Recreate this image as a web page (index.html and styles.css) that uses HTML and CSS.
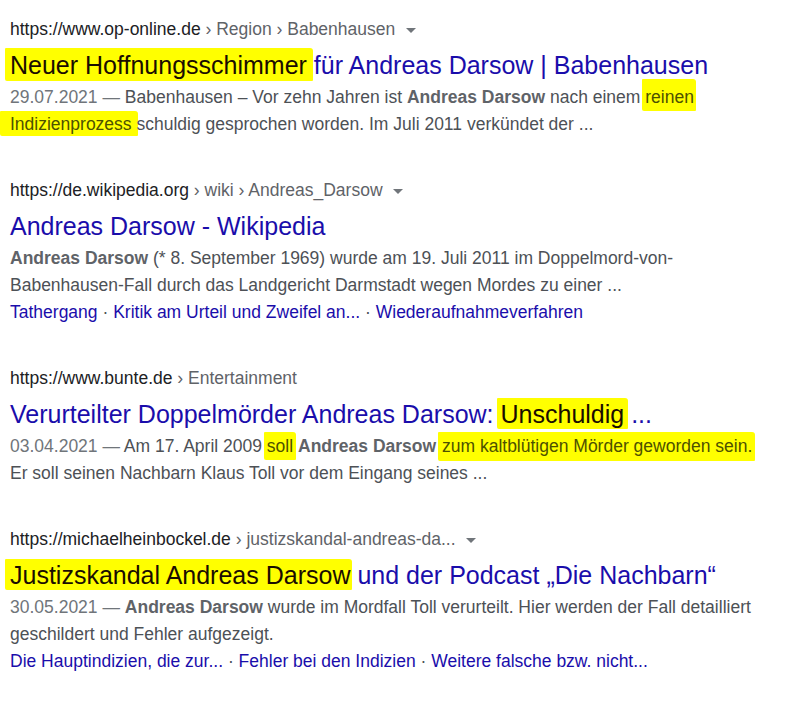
FILE: index.html
```html
<!DOCTYPE html>
<html lang="de">
<head>
<meta charset="UTF-8">
<title>Andreas Darsow - Suche</title>
<link rel="stylesheet" href="styles.css">
</head>
<body>

<div class="results">

    <div class="result">
        <div class="cite">https://www.op-online.de <span class="crumb">› Region › Babenhausen</span> <span class="arrow"></span></div>
        <h3 class="title"><a href="#"><span class="mark mark-title m1">Neuer Hoffnungsschimmer</span> für Andreas Darsow | Babenhausen</a></h3>
        <div class="snippet">
            <span class="date">29.07.2021 — </span>Babenhausen – Vor zehn Jahren ist <b>Andreas Darsow</b> nach einem <span class="mark m2">reinen</span><br>
            <span class="mark m3">Indizienprozess</span> schuldig gesprochen worden. Im Juli 2011 verkündet der ...
        </div>
    </div>

    <div class="result">
        <div class="cite">https://de.wikipedia.org <span class="crumb">› wiki › Andreas_Darsow</span> <span class="arrow"></span></div>
        <h3 class="title"><a href="#">Andreas Darsow - Wikipedia</a></h3>
        <div class="snippet">
            <b>Andreas Darsow</b> (* 8. September 1969) wurde am 19. Juli 2011 im Doppelmord-von-<br>
            Babenhausen-Fall durch das Landgericht Darmstadt wegen Mordes zu einer ...
        </div>
        <div class="sitelinks">
            <a href="#">Tathergang</a> · <a href="#">Kritik am Urteil und Zweifel an...</a> · <a href="#">Wiederaufnahmeverfahren</a>
        </div>
    </div>

    <div class="result">
        <div class="cite">https://www.bunte.de <span class="crumb">› Entertainment</span></div>
        <h3 class="title"><a href="#">Verurteilter Doppelmörder Andreas Darsow: <span class="mark mark-title m4">Unschuldig</span> ...</a></h3>
        <div class="snippet">
            <span class="date">03.04.2021 — </span>Am 17. April 2009 <span class="mark m5">soll</span> <b>Andreas Darsow</b> <span class="mark m6">zum kaltblütigen Mörder geworden sein.</span><br>
            Er soll seinen Nachbarn Klaus Toll vor dem Eingang seines ...
        </div>
    </div>

    <div class="result">
        <div class="cite">https://michaelheinbockel.de <span class="crumb">› justizskandal-andreas-da...</span> <span class="arrow"></span></div>
        <h3 class="title"><a href="#"><span class="mark mark-title m7">Justizskandal Andreas Darsow</span> und der Podcast „Die Nachbarn“</a></h3>
        <div class="snippet">
            <span class="date">30.05.2021 — </span><b>Andreas Darsow</b> wurde im Mordfall Toll verurteilt. Hier werden der Fall detailliert<br>
            geschildert und Fehler aufgezeigt.
        </div>
        <div class="sitelinks">
            <a href="#">Die Hauptindizien, die zur...</a> · <a href="#">Fehler bei den Indizien</a> · <a href="#">Weitere falsche bzw. nicht...</a>
        </div>
    </div>

</div>

</body>
</html>
```

FILE: styles.css
```css
body {
    margin: 0;
    padding: 17px 10px 0 10px;
    background-color: #fff;
    font-family: "Liberation Sans", Arial, sans-serif;
}
.result {
    margin-bottom: 40px;
}
.cite {
    font-size: 17.5px;
    line-height: 24px;
    color: #202124;
    white-space: nowrap;
}
.crumb {
    color: #5f6368;
}
.arrow {
    display: inline-block;
    width: 0;
    height: 0;
    margin-left: 6px;
    vertical-align: middle;
    border-left: 5px solid transparent;
    border-right: 5px solid transparent;
    border-top: 5px solid #70757a;
}
.title {
    margin: 9px 0 0 0;
    font-size: 25px;
    font-weight: normal;
    line-height: 30px;
    white-space: nowrap;
}
.title a {
    color: #1a0dab;
    text-decoration: none;
}
.snippet {
    margin-top: 4px;
    font-size: 17.5px;
    line-height: 27px;
    color: #4d5156;
    white-space: nowrap;
}
.snippet b {
    color: #5f6368;
}
.date {
    color: #70757a;
}
.sitelinks {
    font-size: 17.5px;
    line-height: 27px;
    color: #4d5156;
    white-space: nowrap;
}
.sitelinks a {
    color: #1a0dab;
    text-decoration: none;
}

/* marker strokes */
.mark {
    background-color: #ffff00;
    color: #4d5100;
    padding: 4px 3px;
    margin: 0 -3px;
    border-radius: 1px 3px 1px 2px;
}
.mark-title {
    color: #1a0d00;
}
.m1 {
    padding: 3px 6px 2px 5px;
    margin: 0 -6px 0 -5px;
}
.m2 {
    padding: 8px 2px 4px 3px;
}
.m3 {
    padding: 3px 6px 2px 10px;
    margin: 0 -6px 0 -10px;
}
.m4 {
    padding: 2px 4px 1px 4px;
    margin: 0 -4px;
}
.m6 {
    padding: 4px 3px 5px 4px;
}
.m7 {
    padding: 2px 2px 1px 5px;
    margin: 0 -2px 0 -5px;
}
```
